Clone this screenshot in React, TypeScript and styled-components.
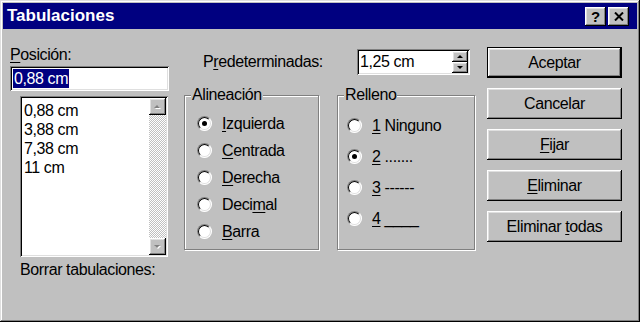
import React from "react";
import styled, { createGlobalStyle } from "styled-components";

const GlobalStyle = createGlobalStyle`
  html, body {
    margin: 0;
    padding: 0;
    background: #ffffff;
  }
  body {
    font-family: "Liberation Sans", Arial, sans-serif;
    font-size: 16px;
    letter-spacing: -0.4px;
    color: #000;
  }
`;

const raised = `
  box-shadow: inset -1px -1px #000, inset 1px 1px #fff,
    inset -2px -2px #808080, inset 2px 2px #dfdfdf;
`;

const sunken = `
  box-shadow: inset 1px 1px #808080, inset -1px -1px #fff,
    inset 2px 2px #000, inset -2px -2px #dfdfdf;
`;

const Window = styled.div`
  width: 640px;
  height: 322px;
  box-sizing: border-box;
  padding: 3px;
  background: #c0c0c0;
  box-shadow: inset -1px -1px #000, inset 1px 1px #dfdfdf,
    inset -2px -2px #808080, inset 2px 2px #fff;
  display: flex;
  flex-direction: column;
`;

const TitleBar = styled.div`
  height: 26px;
  flex: none;
  background: #000080;
  color: #fff;
  display: flex;
  align-items: center;
  justify-content: space-between;
  padding: 0 8px 0 4px;
`;

const Title = styled.span`
  font-weight: bold;
  font-size: 17px;
  letter-spacing: 0;
`;

const TitleControls = styled.div`
  display: flex;
  gap: 2px;
`;

const TitleButton = styled.div`
  width: 21px;
  height: 19px;
  background: #c0c0c0;
  ${raised}
  display: flex;
  align-items: center;
  justify-content: center;
  color: #000;
  font-weight: bold;
  font-size: 15px;
  letter-spacing: 0;
`;

const Body = styled.div`
  flex: 1;
  display: flex;
  padding-left: 7px;
`;

const LeftCol = styled.div`
  width: 159px;
  display: flex;
  flex-direction: column;
  padding-top: 17px;
`;

const Label = styled.div<{ $indent?: number; $gap?: number }>`
  line-height: 18px;
  margin-left: ${(p) => p.$indent ?? 0}px;
  margin-top: ${(p) => p.$gap ?? 0}px;
  white-space: nowrap;
`;

const U = styled.span`
  text-decoration: underline;
  text-underline-offset: 2px;
`;

const TextField = styled.div`
  height: 25px;
  margin-top: 2px;
  box-sizing: border-box;
  padding: 2px 3px;
  background: #fff;
  ${sunken}
  display: flex;
  align-items: center;
`;

const Selected = styled.span`
  background: #000080;
  color: #fff;
  line-height: 19px;
  padding: 0 1px;
`;

const ListBox = styled.div`
  width: 148px;
  height: 161px;
  margin: 5px 0 0 10px;
  box-sizing: border-box;
  padding: 2px;
  background: #fff;
  ${sunken}
  display: flex;
`;

const ListItems = styled.div`
  flex: 1;
  padding: 3px 2px;
  line-height: 19px;
`;

const ScrollBar = styled.div`
  width: 17px;
  display: flex;
  flex-direction: column;
`;

const ScrollButton = styled.div`
  height: 17px;
  background: #c0c0c0;
  ${raised}
  display: flex;
  align-items: center;
  justify-content: center;
`;

const ScrollTrack = styled.div`
  flex: 1;
  background-color: #fff;
  background-image: repeating-conic-gradient(#c0c0c0 0 25%, #fff 0 50%);
  background-size: 2px 2px;
`;

const MidCol = styled.div`
  width: 293px;
  margin-left: 14px;
  padding-top: 20px;
  display: flex;
  flex-direction: column;
`;

const DefaultsRow = styled.div`
  height: 26px;
  display: flex;
  align-items: center;
  padding-left: 20px;
`;

const SpinBox = styled.div`
  width: 113px;
  height: 26px;
  margin-left: auto;
  margin-right: 6px;
  box-sizing: border-box;
  padding: 2px 2px 2px 3px;
  background: #fff;
  ${sunken}
  display: flex;
  align-items: center;
`;

const SpinText = styled.span`
  flex: 1;
`;

const SpinButtons = styled.div`
  width: 16px;
  height: 100%;
  display: flex;
  flex-direction: column;
`;

const SpinButton = styled.div`
  flex: 1;
  background: #c0c0c0;
  ${raised}
  display: flex;
  align-items: center;
  justify-content: center;
`;

const Groups = styled.div`
  display: flex;
  gap: 18px;
  margin-top: 20px;
  padding-left: 1px;
`;

const Group = styled.div<{ $width: number }>`
  position: relative;
  width: ${(p) => p.$width}px;
  height: 155px;
  box-sizing: border-box;
  border: 1px solid #808080;
  box-shadow: inset 1px 1px #fff, 1px 1px #fff;
  padding-top: 14px;
`;

const GroupTitle = styled.span`
  position: absolute;
  top: -10px;
  left: 6px;
  padding: 0 1px;
  background: #c0c0c0;
  line-height: 18px;
`;

const RadioRow = styled.div<{ $height: number; $indent: number }>`
  height: ${(p) => p.$height}px;
  padding-left: ${(p) => p.$indent}px;
  display: flex;
  align-items: center;
  gap: 10px;
  white-space: nowrap;
`;

const RadioDot = styled.span<{ $on?: boolean }>`
  position: relative;
  flex: none;
  width: 15px;
  height: 15px;
  box-sizing: border-box;
  border-radius: 50%;
  border: 1px solid;
  border-color: #808080 #fff #fff #808080;
  background: #fff;

  &::before {
    content: "";
    position: absolute;
    inset: 0;
    border-radius: 50%;
    border: 1px solid;
    border-color: #000 #dfdfdf #dfdfdf #000;
  }

  &::after {
    content: "";
    display: ${(p) => (p.$on ? "block" : "none")};
    position: absolute;
    left: 4px;
    top: 4px;
    width: 5px;
    height: 5px;
    border-radius: 50%;
    background: #000;
  }
`;

const RightCol = styled.div`
  width: 135px;
  margin-left: 11px;
  padding-top: 18px;
  display: flex;
  flex-direction: column;
  gap: 10px;
`;

const Button = styled.div<{ $default?: boolean }>`
  height: 31px;
  box-sizing: border-box;
  background: #c0c0c0;
  border: ${(p) => (p.$default ? "1px solid #000" : "none")};
  ${raised}
  display: flex;
  align-items: center;
  justify-content: center;
`;

const Arrow = ({ up, color, shadow }: { up: boolean; color: string; shadow?: boolean }) => (
  <svg width="9" height="6" viewBox="0 0 9 6">
    {shadow && (
      <polygon
        points={up ? "2,5 5,2 8,5" : "2,2 8,2 5,5"}
        fill="#fff"
      />
    )}
    <polygon points={up ? "1,4 4,1 7,4" : "1,1 7,1 4,4"} fill={color} />
  </svg>
);

const Radio = ({ on, children }: { on?: boolean; children: React.ReactNode }) => (
  <>
    <RadioDot $on={on} />
    <span>{children}</span>
  </>
);

const alignments: [React.ReactNode, boolean][] = [
  [<><U>I</U>zquierda</>, true],
  [<><U>C</U>entrada</>, false],
  [<><U>D</U>erecha</>, false],
  [<>Deci<U>m</U>al</>, false],
  [<><U>B</U>arra</>, false],
];

const leaders: [React.ReactNode, boolean][] = [
  [<><U>1</U> Ninguno</>, false],
  [<><U>2</U> .......</>, true],
  [<><U>3</U> ------</>, false],
  [<><U>4</U> ____</>, false],
];

const stops = ["0,88 cm", "3,88 cm", "7,38 cm", "11 cm"];

export default function App() {
  return (
    <>
      <GlobalStyle />
      <Window>
        <TitleBar>
          <Title>Tabulaciones</Title>
          <TitleControls>
            <TitleButton>?</TitleButton>
            <TitleButton>
              <svg width="10" height="9" viewBox="0 0 10 9">
                <path d="M1 0.5 L9 8.5 M9 0.5 L1 8.5" stroke="#000" strokeWidth="2" />
              </svg>
            </TitleButton>
          </TitleControls>
        </TitleBar>
        <Body>
          <LeftCol>
            <Label>
              <U>P</U>osición:
            </Label>
            <TextField>
              <Selected>0,88 cm</Selected>
            </TextField>
            <ListBox>
              <ListItems>
                {stops.map((s) => (
                  <div key={s}>{s}</div>
                ))}
              </ListItems>
              <ScrollBar>
                <ScrollButton>
                  <Arrow up color="#808080" shadow />
                </ScrollButton>
                <ScrollTrack />
                <ScrollButton>
                  <Arrow up={false} color="#808080" shadow />
                </ScrollButton>
              </ScrollBar>
            </ListBox>
            <Label $indent={10} $gap={4}>
              Borrar tabulaciones:
            </Label>
          </LeftCol>
          <MidCol>
            <DefaultsRow>
              <Label>
                P<U>r</U>edeterminadas:
              </Label>
              <SpinBox>
                <SpinText>1,25 cm</SpinText>
                <SpinButtons>
                  <SpinButton>
                    <Arrow up color="#000" />
                  </SpinButton>
                  <SpinButton>
                    <Arrow up={false} color="#000" />
                  </SpinButton>
                </SpinButtons>
              </SpinBox>
            </DefaultsRow>
            <Groups>
              <Group $width={135}>
                <GroupTitle>Alineación</GroupTitle>
                {alignments.map(([label, on], i) => (
                  <RadioRow key={i} $height={27} $indent={12}>
                    <Radio on={on}>{label}</Radio>
                  </RadioRow>
                ))}
              </Group>
              <Group $width={138}>
                <GroupTitle>Relleno</GroupTitle>
                {leaders.map(([label, on], i) => (
                  <RadioRow key={i} $height={31} $indent={9}>
                    <Radio on={on}>{label}</Radio>
                  </RadioRow>
                ))}
              </Group>
            </Groups>
          </MidCol>
          <RightCol>
            <Button $default>Aceptar</Button>
            <Button>Cancelar</Button>
            <Button>
              <span>
                <U>F</U>ijar
              </span>
            </Button>
            <Button>
              <span>
                <U>E</U>liminar
              </span>
            </Button>
            <Button>
              <span>
                Eliminar <U>t</U>odas
              </span>
            </Button>
          </RightCol>
        </Body>
      </Window>
    </>
  );
}
